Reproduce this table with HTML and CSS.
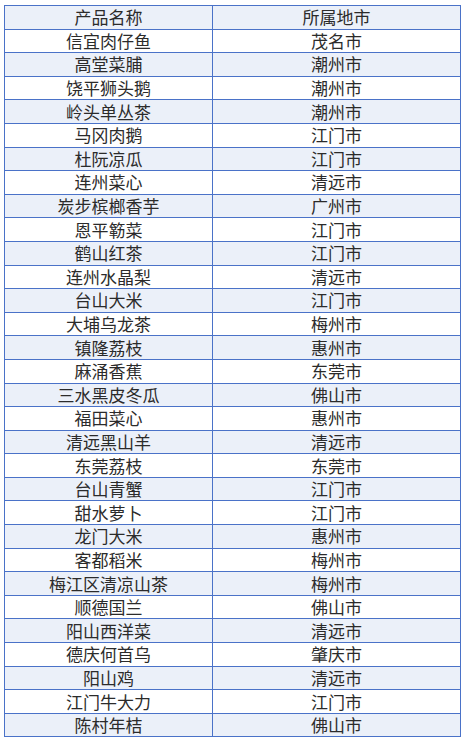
FILE: index.html
```html
<!DOCTYPE html>
<html lang="zh-CN">
<head>
<meta charset="utf-8">
<link rel="stylesheet" href="styles.css">
</head>
<body>
<table class="products">
  <thead>
    <tr><th class="name">产品名称</th><th class="city">所属地市</th></tr>
  </thead>
  <tbody>
    <tr><td>信宜肉仔鱼</td><td>茂名市</td></tr>
    <tr><td>高堂菜脯</td><td>潮州市</td></tr>
    <tr><td>饶平狮头鹅</td><td>潮州市</td></tr>
    <tr><td>岭头单丛茶</td><td>潮州市</td></tr>
    <tr><td>马冈肉鹅</td><td>江门市</td></tr>
    <tr><td>杜阮凉瓜</td><td>江门市</td></tr>
    <tr><td>连州菜心</td><td>清远市</td></tr>
    <tr><td>炭步槟榔香芋</td><td>广州市</td></tr>
    <tr><td>恩平簕菜</td><td>江门市</td></tr>
    <tr><td>鹤山红茶</td><td>江门市</td></tr>
    <tr><td>连州水晶梨</td><td>清远市</td></tr>
    <tr><td>台山大米</td><td>江门市</td></tr>
    <tr><td>大埔乌龙茶</td><td>梅州市</td></tr>
    <tr><td>镇隆荔枝</td><td>惠州市</td></tr>
    <tr><td>麻涌香蕉</td><td>东莞市</td></tr>
    <tr><td>三水黑皮冬瓜</td><td>佛山市</td></tr>
    <tr><td>福田菜心</td><td>惠州市</td></tr>
    <tr><td>清远黑山羊</td><td>清远市</td></tr>
    <tr><td>东莞荔枝</td><td>东莞市</td></tr>
    <tr><td>台山青蟹</td><td>江门市</td></tr>
    <tr><td>甜水萝卜</td><td>江门市</td></tr>
    <tr><td>龙门大米</td><td>惠州市</td></tr>
    <tr><td>客都稻米</td><td>梅州市</td></tr>
    <tr><td>梅江区清凉山茶</td><td>梅州市</td></tr>
    <tr><td>顺德国兰</td><td>佛山市</td></tr>
    <tr><td>阳山西洋菜</td><td>清远市</td></tr>
    <tr><td>德庆何首乌</td><td>肇庆市</td></tr>
    <tr><td>阳山鸡</td><td>清远市</td></tr>
    <tr><td>江门牛大力</td><td>江门市</td></tr>
    <tr><td>陈村年桔</td><td>佛山市</td></tr>
  </tbody>
</table>
</body>
</html>
```

FILE: styles.css
```css
html, body {
  margin: 0;
  padding: 0;
  background: #ffffff;
}

body {
  padding: 5px 0 0 4px;
  font-family: "Noto Sans CJK SC", "Noto Sans", sans-serif;
  color: #2b2b2b;
}

.products {
  border-collapse: collapse;
  width: 457px;
  table-layout: fixed;
}

.products tr {
  height: 23.6px;
}

.products th,
.products td {
  border: 1px solid #4a72c8;
  padding: 0;
  text-align: center;
  vertical-align: middle;
  font-size: 17px;
  line-height: 18px;
  font-weight: normal;
}

.products th.name {
  width: 207px;
}

.products thead tr,
.products tbody tr:nth-child(even) {
  background: #ebf0f9;
}
```
